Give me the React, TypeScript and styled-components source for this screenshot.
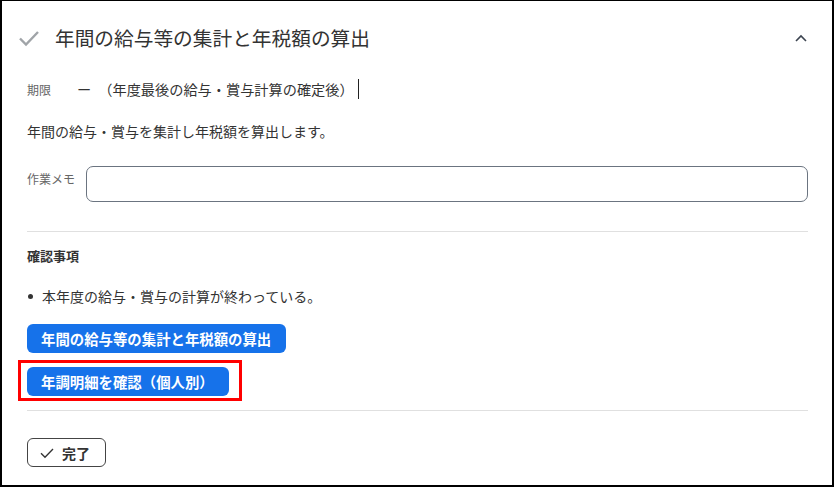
import React from 'react';
import styled, { createGlobalStyle } from 'styled-components';

const GlobalStyle = createGlobalStyle`
  html, body {
    margin: 0;
    padding: 0;
    background: #fff;
  }
  body {
    font-family: "Noto Sans CJK JP", "Noto Sans", sans-serif;
    color: #333;
  }
  * {
    box-sizing: border-box;
  }
`;

const Frame = styled.div`
  width: 834px;
  height: 487px;
  border: 2px solid #000;
  border-top-width: 1px;
  background: #fff;
  display: flex;
  flex-direction: column;
`;

const Header = styled.div`
  height: 73px;
  display: flex;
  align-items: center;
  padding: 0 25px 0 15px;
`;

const Title = styled.h2`
  flex: 1;
  margin: 0 0 0 14px;
  font-size: 19.7px;
  font-weight: 400;
  color: #333;
  line-height: 1;
`;

const Body = styled.div`
  display: flex;
  flex-direction: column;
  padding: 0 24px 0 25px;
`;

const DeadlineRow = styled.div`
  margin-top: 5px;
  height: 20px;
  display: flex;
  align-items: center;
`;

const Label = styled.span`
  font-size: 12px;
  color: #666;
  width: 50px;
  flex-shrink: 0;
`;

const Value = styled.span`
  font-size: 14.2px;
  color: #333;
`;

const Caret = styled.span`
  display: inline-block;
  width: 1px;
  height: 20px;
  background: #222;
  margin-left: 4px;
`;

const Text = styled.p`
  margin: ${(p: { $top: number }) => p.$top}px 0 0;
  font-size: 14px;
  line-height: 20px;
  color: #333;
`;

const MemoRow = styled.div`
  margin-top: 25px;
  display: flex;
  align-items: flex-start;
`;

const MemoLabel = styled(Label)`
  width: 59px;
  margin-top: 4px;
`;

const MemoInput = styled.input`
  flex: 1;
  height: 36px;
  border: 1px solid #6b7480;
  border-radius: 7px;
  padding: 0 10px;
  font: inherit;
  font-size: 14px;
  outline: none;
`;

const Divider = styled.hr`
  margin: ${(p: { $top: number }) => p.$top}px 0 0;
  border: 0;
  border-top: 1px solid #e0e0e0;
  height: 0;
`;

const SectionTitle = styled.h3`
  margin: 14px 0 0;
  font-size: 13px;
  line-height: 20px;
  font-weight: 700;
  color: #333;
`;

const Checklist = styled.ul`
  margin: 20px 0 0;
  padding: 0;
  list-style: none;
`;

const CheckItem = styled.li`
  display: flex;
  align-items: center;
  font-size: 14px;
  line-height: 20px;
  color: #333;
  &::before {
    content: '';
    width: 5px;
    height: 5px;
    border-radius: 50%;
    background: #333;
    margin: 0 9px 0 1px;
  }
`;

const Actions = styled.div`
  display: flex;
  flex-direction: column;
  align-items: flex-start;
  gap: 14px;
  margin-top: 18px;
`;

const PrimaryButton = styled.button`
  height: 29px;
  padding: 0 15px 0 14px;
  border: 0;
  border-radius: 6px;
  background: #1672ea;
  color: #fff;
  font-family: inherit;
  font-size: 14.4px;
  font-weight: 700;
  cursor: pointer;
`;

const Highlight = styled.div`
  position: relative;
  &::after {
    content: '';
    position: absolute;
    left: -9px;
    top: -7px;
    right: -13px;
    bottom: -5px;
    border: 3px solid #f00;
    pointer-events: none;
  }
`;

const DoneButton = styled.button`
  margin-top: 27px;
  align-self: flex-start;
  height: 29px;
  width: 79px;
  display: flex;
  align-items: center;
  justify-content: center;
  gap: 7px;
  border: 1px solid #444;
  border-radius: 6px;
  background: #fff;
  color: #333;
  font-family: inherit;
  font-size: 14px;
  font-weight: 700;
  padding: 0 4px 0 0;
`;

const CheckIcon: React.FC<{ size: number; color: string; width: number }> = ({ size, color, width }) => (
  <svg width={size} height={size} viewBox="0 0 24 24" fill="none" stroke={color} strokeWidth={width}>
    <polyline points="3,12.5 9,18.5 21,6" />
  </svg>
);

const App: React.FC = () => {
  return (
    <>
      <GlobalStyle />
      <Frame>
        <Header>
          <CheckIcon size={24} color="#a0a4a8" width={2.4} />
          <Title>年間の給与等の集計と年税額の算出</Title>
          <svg width="12" height="8" viewBox="0 0 12 8" fill="none" stroke="#3c4450" strokeWidth="1.6">
            <polyline points="1,7 6,2 11,7" />
          </svg>
        </Header>
        <Body>
          <DeadlineRow>
            <Label>期限</Label>
            <Value>ー　（年度最後の給与・賞与計算の確定後）</Value>
            <Caret />
          </DeadlineRow>
          <Text $top={22}>年間の給与・賞与を集計し年税額を算出します。</Text>
          <MemoRow>
            <MemoLabel>作業メモ</MemoLabel>
            <MemoInput />
          </MemoRow>
          <Divider $top={29} />
          <SectionTitle>確認事項</SectionTitle>
          <Checklist>
            <CheckItem>本年度の給与・賞与の計算が終わっている。</CheckItem>
          </Checklist>
          <Actions>
            <PrimaryButton>年間の給与等の集計と年税額の算出</PrimaryButton>
            <Highlight>
              <PrimaryButton>年調明細を確認（個人別）</PrimaryButton>
            </Highlight>
          </Actions>
          <Divider $top={14} />
          <DoneButton>
            <CheckIcon size={16} color="#333" width={2} />
            完了
          </DoneButton>
        </Body>
      </Frame>
    </>
  );
};

export default App;
